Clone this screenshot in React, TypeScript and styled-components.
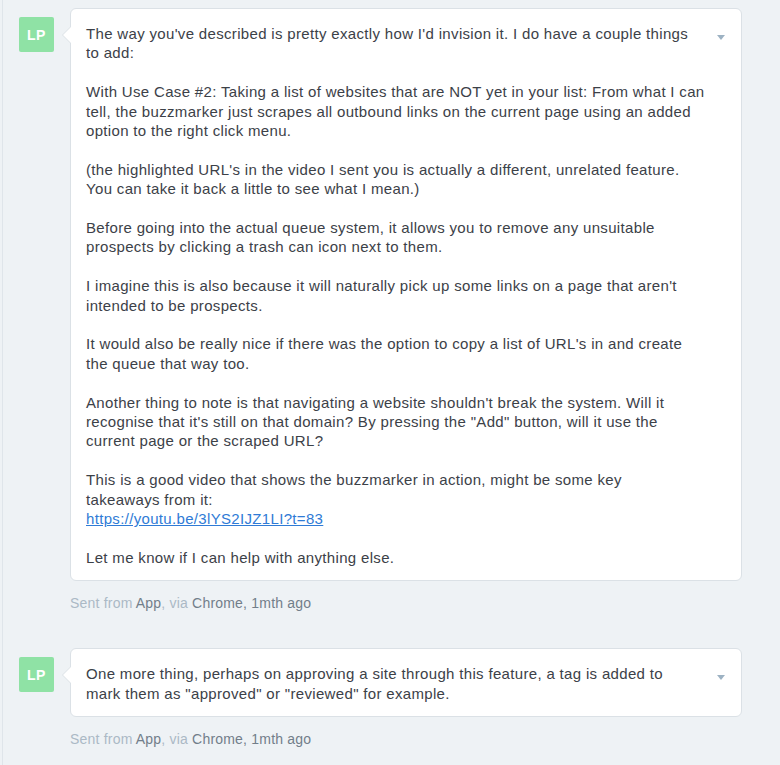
import React from "react";
import styled, { createGlobalStyle } from "styled-components";

type Paragraph = {
  lines: string[];
  link?: string;
};

type Message = {
  id: number;
  initials: string;
  paragraphs: Paragraph[];
  app: string;
  browser: string;
  ago: string;
};

const messages: Message[] = [
  {
    id: 1,
    initials: "LP",
    paragraphs: [
      {
        lines: [
          "The way you've described is pretty exactly how I'd invision it. I do have a couple things",
          "to add:",
        ],
      },
      {
        lines: [
          "With Use Case #2: Taking a list of websites that are NOT yet in your list: From what I can",
          "tell, the buzzmarker just scrapes all outbound links on the current page using an added",
          "option to the right click menu.",
        ],
      },
      {
        lines: [
          "(the highlighted URL's in the video I sent you is actually a different, unrelated feature.",
          "You can take it back a little to see what I mean.)",
        ],
      },
      {
        lines: [
          "Before going into the actual queue system, it allows you to remove any unsuitable",
          "prospects by clicking a trash can icon next to them.",
        ],
      },
      {
        lines: [
          "I imagine this is also because it will naturally pick up some links on a page that aren't",
          "intended to be prospects.",
        ],
      },
      {
        lines: [
          "It would also be really nice if there was the option to copy a list of URL's in and create",
          "the queue that way too.",
        ],
      },
      {
        lines: [
          "Another thing to note is that navigating a website shouldn't break the system. Will it",
          "recognise that it's still on that domain? By pressing the \"Add\" button, will it use the",
          "current page or the scraped URL?",
        ],
      },
      {
        lines: [
          "This is a good video that shows the buzzmarker in action, might be some key",
          "takeaways from it:",
        ],
        link: "https://youtu.be/3lYS2IJZ1LI?t=83",
      },
      { lines: ["Let me know if I can help with anything else."] },
    ],
    app: "App",
    browser: "Chrome",
    ago: "1mth ago",
  },
  {
    id: 2,
    initials: "LP",
    paragraphs: [
      {
        lines: [
          "One more thing, perhaps on approving a site through this feature, a tag is added to",
          "mark them as \"approved\" or \"reviewed\" for example.",
        ],
      },
    ],
    app: "App",
    browser: "Chrome",
    ago: "1mth ago",
  },
];

const App = () => {
  return (
    <>
      <GlobalStyle />
      <Thread>
        {messages.map((m) => (
          <MessageRow key={m.id}>
            <Avatar>{m.initials}</Avatar>
            <MessageBody>
              <Bubble>
                <Caret />
                {m.paragraphs.map((p, i) => (
                  <Para key={i}>
                    {p.lines.map((line, j) => (
                      <Line key={j}>{line}</Line>
                    ))}
                    {p.link && (
                      <Line>
                        <Link href="#">{p.link}</Link>
                      </Line>
                    )}
                  </Para>
                ))}
              </Bubble>
              <Meta>
                Sent from <strong>{m.app}</strong>, via{" "}
                <strong>
                  {m.browser}, {m.ago}
                </strong>
              </Meta>
            </MessageBody>
          </MessageRow>
        ))}
      </Thread>
    </>
  );
};

const GlobalStyle = createGlobalStyle`
  html, body {
    margin: 0;
    padding: 0;
    background: #eef2f5;
  }
  body {
    font-family: "Liberation Sans", Arial, sans-serif;
  }
`;

const Thread = styled.div`
  margin-left: 2px;
  border-left: 1px solid #dfe5ea;
  min-height: 765px;
  box-sizing: border-box;
  padding: 8px 0 0 0;
  display: flex;
  flex-direction: column;
  gap: 37px;
`;

const MessageRow = styled.div`
  display: flex;
  align-items: flex-start;
  padding-left: 16px;
  gap: 16px;
`;

const Avatar = styled.div`
  flex: 0 0 35px;
  width: 35px;
  height: 35px;
  margin-top: 9px;
  border-radius: 2px;
  background: #8fe2a5;
  color: #fff;
  font-weight: bold;
  font-size: 14px;
  display: flex;
  align-items: center;
  justify-content: center;
  letter-spacing: 0.5px;
`;

const MessageBody = styled.div`
  width: 672px;
`;

const Bubble = styled.div`
  position: relative;
  background: #fff;
  border: 1px solid #dbe1e6;
  border-radius: 6px;
  padding: 15px 36px 13px 15px;
  color: #3c4148;
  font-size: 15px;
  letter-spacing: 0.33px;
  line-height: 19.4px;

  &::before,
  &::after {
    content: "";
    position: absolute;
    top: 17px;
    width: 0;
    height: 0;
    border-style: solid;
    border-width: 9px 9px 9px 0;
  }
  &::before {
    left: -9px;
    border-color: transparent #dbe1e6 transparent transparent;
  }
  &::after {
    left: -8px;
    border-color: transparent #fff transparent transparent;
  }
`;

const Caret = styled.span`
  position: absolute;
  top: 26px;
  right: 16px;
  width: 0;
  height: 0;
  border-style: solid;
  border-width: 5px 4.5px 0 4.5px;
  border-color: #9db2c3 transparent transparent transparent;
`;

const Para = styled.p`
  margin: 0 0 19.4px;
  &:last-of-type {
    margin-bottom: 0;
  }
`;

const Line = styled.span`
  display: block;
  white-space: nowrap;
`;

const Link = styled.a`
  color: #2f7bd6;
  text-decoration: underline;
`;

const Meta = styled.div`
  margin-top: 14px;
  font-size: 14px;
  letter-spacing: 0.2px;
  color: #abb9c5;
  strong {
    font-weight: normal;
    color: #727e8a;
  }
`;

export default App;
